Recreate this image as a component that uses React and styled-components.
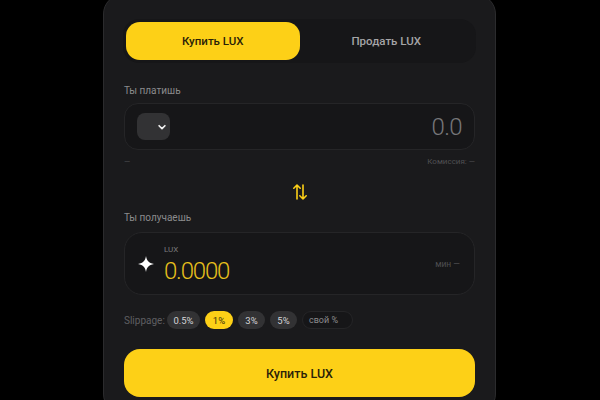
import styled, { createGlobalStyle } from "styled-components"

const Global = createGlobalStyle`
  html, body {
    margin: 0;
    height: 400px;
    overflow: hidden;
    background: #000;
  }
  * { box-sizing: border-box; }
`

const SLIPPAGE = [
  { value: "0.5%", width: 33 },
  { value: "1%", width: 28 },
  { value: "3%", width: 27 },
  { value: "5%", width: 27 },
]

const ChevronIcon = () => (
  <svg width="10" height="10" viewBox="0 0 24 24" fill="none" stroke="#f1f1f1" strokeWidth="4" strokeLinecap="round" strokeLinejoin="round">
    <path d="M5 9l7 7 7-7" />
  </svg>
)

const SwapIcon = () => (
  <svg width="16" height="18" viewBox="0 0 16 18" fill="none" stroke="#fdd017" strokeWidth="1.6" strokeLinecap="round" strokeLinejoin="round">
    <path d="M5 16V2M1.8 5.2L5 2l3.2 3.2" />
    <path d="M11 2v14M7.8 12.8L11 16l3.2-3.2" />
  </svg>
)

const SparkIcon = () => (
  <svg width="16" height="16" viewBox="0 0 16 16" fill="#fff">
    <path d="M8 0c.7 4.6 2.6 7 8 8-5.400 1-7.300 3.400-8 8-.7-4.600-2.600-7-8-8 5.400-1 7.300-3.400 8-8z" />
  </svg>
)

export default function App() {
  return (
    <Page>
      <Global />
      <Card>
        <Tabs>
          <Tab $active>Купить LUX</Tab>
          <Tab>Продать LUX</Tab>
        </Tabs>

        <Label>Ты платишь</Label>
        <PayBox>
          <TokenSelect><ChevronIcon /></TokenSelect>
          <PayAmount>0.0</PayAmount>
        </PayBox>
        <HintRow>
          <span>—</span>
          <span>Комиссия: —</span>
        </HintRow>

        <SwapRow><SwapIcon /></SwapRow>

        <Label $tight>Ты получаешь</Label>
        <ReceiveBox>
          <SparkIcon />
          <ReceiveInfo>
            <TokenName>LUX</TokenName>
            <ReceiveAmount>0.0000</ReceiveAmount>
          </ReceiveInfo>
          <MinText>мин —</MinText>
        </ReceiveBox>

        <SlippageRow>
          <SlippageLabel>Slippage:</SlippageLabel>
          {SLIPPAGE.map((s) => (
            <Chip key={s.value} $active={s.value === "1%"} $width={s.width}>{s.value}</Chip>
          ))}
          <CustomChip>свой %</CustomChip>
        </SlippageRow>

        <Submit>Купить LUX</Submit>
      </Card>
    </Page>
  )
}

const Page = styled.div`
  display: flex;
  justify-content: center;
  height: 400px;
  font-family: Roboto, "Noto Sans", sans-serif;
`

const Card = styled.div`
  width: 393px;
  height: 420px;
  margin-top: -6px;
  margin-right: 1px;
  padding: 24px 20px 0;
  flex-shrink: 0;
  background: #1a1a1c;
  border: 1px solid #2b2b2d;
  border-radius: 20px;
`

const Tabs = styled.div`
  display: grid;
  grid-template-columns: 1fr 1fr;
  height: 44px;
  margin: 0 -1px;
  padding: 3px;
  background: #161618;
  border-radius: 16px;
`

const Tab = styled.div`
  display: flex;
  align-items: center;
  justify-content: center;
  font-size: 11.5px;
  font-weight: 500;
  border-radius: 14px;
  color: ${(p) => (p.$active ? "#2a2208" : "#a5a5a7")};
  background: ${(p) => (p.$active ? "#fdd017" : "transparent")};
`

const Label = styled.div`
  margin-top: ${(p) => (p.$tight ? "9px" : "20px")};
  font-size: 10px;
  line-height: 15px;
  color: #8b8b8d;
`

const PayBox = styled.div`
  display: flex;
  align-items: center;
  justify-content: space-between;
  height: 47px;
  margin-top: 5px;
  padding: 0 12px;
  background: #161618;
  border: 1px solid #252527;
  border-radius: 14px;
`

const TokenSelect = styled.div`
  display: flex;
  align-items: center;
  justify-content: flex-end;
  width: 33px;
  height: 27px;
  padding-right: 3px;
  background: #323234;
  border-radius: 8px;
`

const PayAmount = styled.div`
  font-size: 24px;
  font-weight: 300;
  letter-spacing: -0.6px;
  color: #77777a;
`

const HintRow = styled.div`
  display: flex;
  justify-content: space-between;
  margin-top: 6px;
  font-size: 8px;
  line-height: 11px;
  color: #4f4f52;
`

const SwapRow = styled.div`
  display: flex;
  justify-content: center;
  margin-top: 16px;
  height: 18px;
`

const ReceiveBox = styled.div`
  display: flex;
  align-items: center;
  height: 63px;
  margin-top: 7px;
  padding: 0 13px;
  background: #161618;
  border: 1px solid #252527;
  border-radius: 18px;
`

const ReceiveInfo = styled.div`
  display: flex;
  flex-direction: column;
  flex: 1;
  margin-left: 10px;
  padding-top: 2px;
`

const TokenName = styled.div`
  margin-bottom: 2px;
  font-size: 8px;
  line-height: 10px;
  color: #7a7a7c;
`

const ReceiveAmount = styled.div`
  font-size: 24px;
  line-height: 28px;
  font-weight: 300;
  letter-spacing: -1.2px;
  color: #e8c01c;
`

const MinText = styled.div`
  margin-right: 1px;
  font-size: 8.5px;
  color: #4f4f52;
`

const SlippageRow = styled.div`
  display: flex;
  align-items: center;
  gap: 5px;
  margin-top: 16px;
`

const SlippageLabel = styled.span`
  width: 38px;
  font-size: 10px;
  color: #5f5f62;
`

const Chip = styled.div`
  display: flex;
  align-items: center;
  justify-content: center;
  width: ${(p) => p.$width}px;
  height: 18px;
  font-size: 9.5px;
  font-weight: 400;
  border-radius: 9px;
  color: ${(p) => (p.$active ? "#3a300a" : "#d4d4d6")};
  background: ${(p) => (p.$active ? "#fdd017" : "#323234")};
`

const CustomChip = styled.div`
  display: flex;
  align-items: center;
  width: 51px;
  height: 18px;
  padding-left: 6px;
  font-size: 9px;
  color: #8b8b8d;
  background: #161618;
  border: 1px solid #252527;
  border-radius: 9px;
`

const Submit = styled.div`
  display: flex;
  align-items: center;
  justify-content: center;
  height: 48px;
  margin-top: 20px;
  font-size: 12.500px;
  font-weight: 500;
  color: #2a2208;
  background: #fdd017;
  border-radius: 16px;
`
